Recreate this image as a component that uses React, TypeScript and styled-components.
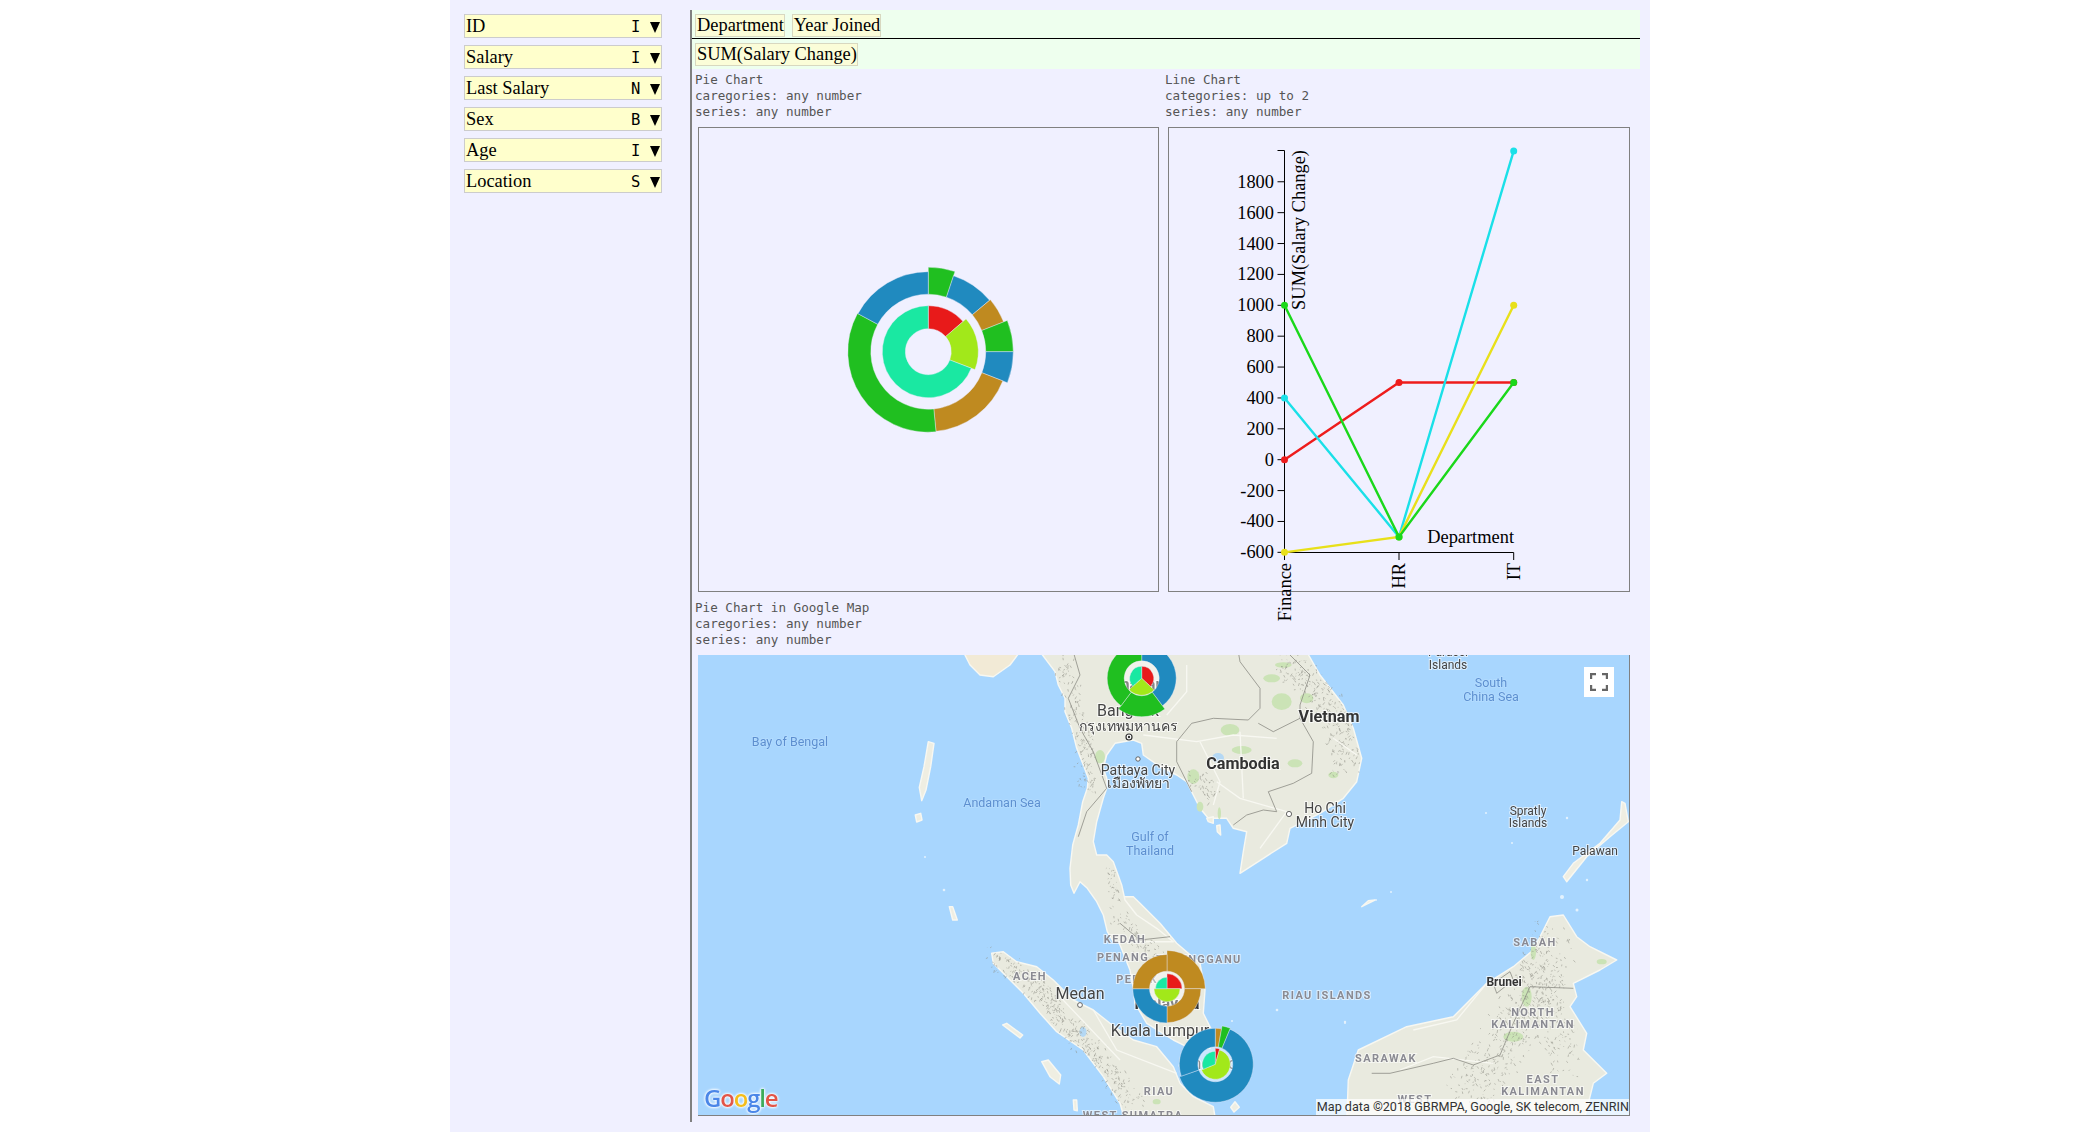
import React from 'react';
import styled, { createGlobalStyle } from 'styled-components';

const GlobalStyle = createGlobalStyle`
  html, body {
    margin: 0;
    background: #fff;
    overflow: hidden;
  }
`;

const SERIF = '"Liberation Serif", "Times New Roman", serif';
const MONO = '"DejaVu Sans Mono", monospace';

const Page = styled.div`
  display: flex;
  width: 1200px;
  height: 1132px;
  margin: 0 auto;
  background: #f0f0ff;
  font-family: ${SERIF};
  font-size: 18.4px;
  color: #000;
`;

const Sidebar = styled.div`
  display: flex;
  flex-direction: column;
  gap: 7px;
  box-sizing: border-box;
  width: 240px;
  padding: 14px 0 0 14px;
`;

const Field = styled.div`
  display: flex;
  align-items: center;
  box-sizing: border-box;
  width: 198px;
  height: 24px;
  padding: 0 0 0 1px;
  background: #ffffcc;
  border: 1px solid #ccc;
`;

const FieldName = styled.span`
  flex: 1;
  line-height: 20px;
`;

const FieldType = styled.span`
  font-family: ${MONO};
  font-size: 15.5px;
  width: 19px;
  margin-top: 1px;
`;

const Arrow = styled.span`
  width: 0;
  height: 0;
  margin: 2px 1px 0 0;
  border-left: 5px solid transparent;
  border-right: 5px solid transparent;
  border-top: 11px solid #000;
`;

const Main = styled.div`
  display: flex;
  flex-direction: column;
  align-self: flex-start;
  box-sizing: border-box;
  width: 950px;
  height: 1112px;
  margin-top: 10px;
  border-left: 2px solid #808080;
`;

const Shelf = styled.div<{ $top?: boolean }>`
  display: flex;
  gap: 7px;
  box-sizing: border-box;
  height: ${(p) => (p.$top ? '29px' : '30px')};
  padding: 4px 3px 0;
  background: #eeffee;
  border-bottom: ${(p) => (p.$top ? '1px solid #000' : 'none')};
`;

const Pill = styled.div`
  box-sizing: border-box;
  height: 23px;
  padding: 0 0 0 1px;
  line-height: 20px;
  white-space: nowrap;
  background: #fbfdd8;
  border: 1px solid #d8d8c0;
`;

const ChartRow = styled.div`
  display: flex;
`;

const ChartCell = styled.div`
  width: 470px;
  padding-left: 3px;
  box-sizing: border-box;
`;

const Caption = styled.div`
  padding-top: 3px;
  font-family: ${MONO};
  font-size: 12.6px;
  line-height: 16px;
  color: #555;
  white-space: pre;
`;

const ChartBox = styled.div<{ $wide?: boolean }>`
  box-sizing: border-box;
  width: ${(p) => (p.$wide ? '462px' : '461px')};
  height: 465px;
  margin: 7px 0 0 3px;
  border: 1px solid #808080;
`;

const ChartSvg = styled.svg`
  display: block;
  width: 100%;
  height: 100%;
  overflow: visible;
`;

const MapSection = styled.div`
  padding: 5px 0 0 3px;
`;

const MapBox = styled.div`
  position: relative;
  box-sizing: border-box;
  width: 932px;
  height: 461px;
  margin: 7px 0 0 3px;
  overflow: hidden;
  background: #a8d6fe;
  border-right: 1px solid #808080;
  border-bottom: 1px solid #808080;
`;

const MapSvg = styled.svg`
  display: block;
  width: 931px;
  height: 460px;
`;

const FullscreenButton = styled.div`
  position: absolute;
  top: 12px;
  right: 15px;
  display: flex;
  align-items: center;
  justify-content: center;
  width: 30px;
  height: 30px;
  background: #fff;
`;

const Attribution = styled.div`
  position: absolute;
  right: 0;
  bottom: 0;
  height: 16px;
  padding: 0 0 0 1px;
  font-family: Roboto, sans-serif;
  font-size: 12.6px;
  line-height: 16px;
  color: #333;
  white-space: nowrap;
  background: rgba(255, 255, 255, 0.75);
`;

const GoogleLogo = styled.div`
  position: absolute;
  left: 6px;
  bottom: 3px;
  font-family: "Open Sans", sans-serif;
  font-size: 24px;
  font-weight: 600;
  line-height: 28px;
  letter-spacing: -1.2px;
  text-shadow: 0 0 3px #fff, 0 0 3px #fff, 0 0 2px #fff;
  filter: blur(0.4px);
`;

const GoogleLetter = styled.span<{ $color: string }>`
  color: ${(p) => p.$color};
`;

const AxisText = styled.text`
  font-family: ${SERIF};
  font-size: 18.4px;
  fill: #000;
`;

const labelStyles = {
  water: 'font-size: 12.5px; fill: #5d8fd0; stroke: rgba(190,225,255,0.6); stroke-width: 1.5px;',
  city: 'font-size: 14px; fill: #444; stroke: rgba(255,255,255,0.7); stroke-width: 2px;',
  small: 'font-size: 12px; fill: #444; stroke: rgba(255,255,255,0.6); stroke-width: 2px;',
  big: 'font-size: 16px; fill: #444; stroke: rgba(255,255,255,0.7); stroke-width: 2px;',
  country: 'font-size: 16.2px; font-weight: 700; fill: #333; stroke: rgba(255,255,255,0.7); stroke-width: 2px;',
  brunei: 'font-size: 12px; font-weight: 700; fill: #333; stroke: rgba(255,255,255,0.7); stroke-width: 2px;',
  region: 'font-size: 11px; font-weight: 700; letter-spacing: 1.4px; fill: #8a8a92; stroke: rgba(255,255,255,0.6); stroke-width: 2px;',
};

type LabelKind = keyof typeof labelStyles;

const MapLabel = styled.text<{ $kind: LabelKind }>`
  font-family: Roboto, "Noto Sans", "DejaVu Sans", sans-serif;
  text-anchor: middle;
  paint-order: stroke;
  filter: blur(0.35px);
  ${(p) => labelStyles[p.$kind]}
`;

const COLORS = {
  red: '#e81a1a',
  lime: '#a2e81a',
  teal: '#1ae8a2',
  green: '#20bf20',
  blue: '#208abf',
  gold: '#bf8a20',
};

interface Slice {
  from: number;
  to: number;
  r: number;
  color: string;
}

const polar = (cx: number, cy: number, r: number, deg: number) => {
  const a = (deg * Math.PI) / 180;
  return `${(cx + r * Math.sin(a)).toFixed(2)} ${(cy - r * Math.cos(a)).toFixed(2)}`;
};

const slicePath = (cx: number, cy: number, inner: number, s: Slice) => {
  const large = s.to - s.from > 180 ? 1 : 0;
  const outerArc = `M${polar(cx, cy, s.r, s.from)}A${s.r} ${s.r} 0 ${large} 1 ${polar(cx, cy, s.r, s.to)}`;
  if (inner === 0) return `${outerArc}L${cx} ${cy}Z`;
  return `${outerArc}L${polar(cx, cy, inner, s.to)}A${inner} ${inner} 0 ${large} 0 ${polar(cx, cy, inner, s.from)}Z`;
};

const Donut: React.FC<{
  cx: number;
  cy: number;
  holes: [number, number];
  inner: Slice[];
  outer: Slice[];
  veil?: boolean;
}> = ({ cx, cy, holes, inner, outer, veil }) => (
  <g stroke="rgba(235,235,250,0.8)" strokeWidth={0.5}>
    {veil && <circle cx={cx} cy={cy} r={holes[1]} fill="rgba(255,255,255,0.4)" stroke="none" />}
    {inner.map((s) => (
      <path key={`i${s.from}`} d={slicePath(cx, cy, holes[0], s)} fill={s.color} />
    ))}
    {outer.map((s) => (
      <path key={`o${s.from}`} d={slicePath(cx, cy, holes[1], s)} fill={s.color} />
    ))}
  </g>
);

const FIELDS = [
  ['ID', 'I'],
  ['Salary', 'I'],
  ['Last Salary', 'N'],
  ['Sex', 'B'],
  ['Age', 'I'],
  ['Location', 'S'],
];

const yOf = (v: number) => 459.7 - v * 0.1544;
const X_POS = [1284.5, 1399, 1513.7];
const SERIES = [
  { color: '#ee1c1c', values: [0, 500, 500] },
  { color: '#1ae0e8', values: [400, -500, 2000] },
  { color: '#e8e01a', values: [-600, -500, 1000] },
  { color: '#1ad81a', values: [1000, -500, 500] },
];
const Y_TICKS = [-600, -400, -200, 0, 200, 400, 600, 800, 1000, 1200, 1400, 1600, 1800];

const LineChart = () => (
  <ChartSvg viewBox="1169 128 460 463">
    <g stroke="#000" strokeWidth={1} fill="none">
      <path d={`M1277.5 150.5H1284.5V552.5H1513.7`} />
      {Y_TICKS.map((t) => (
        <path key={t} d={`M1277.5 ${yOf(t)}H1284.5`} />
      ))}
      {X_POS.map((x) => (
        <path key={x} d={`M${x} 552.5V560`} />
      ))}
    </g>
    {Y_TICKS.map((t) => (
      <AxisText key={t} x={1274} y={yOf(t) + 6} textAnchor="end">
        {t}
      </AxisText>
    ))}
    {['Finance', 'HR', 'IT'].map((name, i) => (
      <AxisText key={name} textAnchor="end" transform={`translate(${X_POS[i] + 6} 563) rotate(-90)`}>
        {name}
      </AxisText>
    ))}
    <AxisText textAnchor="end" transform="translate(1305 150) rotate(-90)">
      SUM(Salary Change)
    </AxisText>
    <AxisText x={1514} y={543} textAnchor="end">
      Department
    </AxisText>
    {SERIES.map((s) => (
      <g key={s.color} fill={s.color}>
        <polyline
          points={s.values.map((v, i) => `${X_POS[i]},${yOf(v)}`).join(' ')}
          stroke={s.color}
          strokeWidth={2.4}
          fill="none"
        />
        {s.values.map((v, i) => (
          <circle key={i} cx={X_POS[i]} cy={yOf(v)} r={3.5} />
        ))}
      </g>
    ))}
  </ChartSvg>
);

// outlines below were traced from 3x crops, so each set has its crop origin
const Z9 = [1000, 655];
const Z10 = [960, 900];
const Z6 = [1300, 650];
const Z11 = [1400, 880];

const trace = (o: number[], pts: number[], closed = true) => {
  let d = '';
  for (let i = 0; i < pts.length; i += 2) {
    d += `${i ? 'L' : 'M'}${(o[0] + pts[i] / 3).toFixed(1)} ${(o[1] + pts[i + 1] / 3).toFixed(1)}`;
  }
  return closed ? `${d}Z` : d;
};

const MALAYA_AND_EAST = [
  trace(Z10, [
    410, -10, 440, 40, 470, 110, 490, 160, 510, 210, 520, 265, 525, 310, 560, 370, 640, 420, 680, 440, 750, 445, 760, 400,
    730, 340, 735, 270, 720, 190, 650, 130, 600, 70, 540, 10, 520, -10,
  ]),
  trace(Z9, [
    120, -10, 165, 50, 175, 90, 195, 130, 195, 170, 215, 220, 230, 280, 250, 330, 265, 370, 262, 400, 248, 440, 235, 510,
    218, 570, 210, 640, 212, 690, 222, 715, 240, 680, 262, 700, 290, 740, 310, 780, 322, 830, 340, 860, 520, 860, 470, 820,
    410, 780, 375, 735, 365, 690, 340, 620, 320, 600, 290, 600, 280, 560, 290, 500, 310, 430, 320, 400, 320, 370, 310, 340,
    320, 300, 345, 265, 400, 255, 425, 265, 430, 300, 480, 335, 530, 360, 560, 380, 580, 420, 600, 460, 625, 490, 680, 490,
    700, 520, 740, 530, 730, 590, 720, 655, 790, 610, 860, 565, 870, 520, 900, 505, 960, 475, 1030, 430, 1070, 380, 1085,
    310, 1060, 220, 1030, 150, 960, 60, 920, -10,
  ]),
];

const SUMATRA = trace(Z10, [
  95, 160, 130, 155, 170, 185, 230, 200, 280, 240, 340, 300, 400, 330, 450, 370, 520, 420, 590, 440, 640, 500, 660, 550,
  700, 590, 760, 620, 770, 680, 500, 680, 480, 610, 430, 530, 370, 450, 290, 395, 240, 340, 190, 280, 130, 220, 100, 190,
]);

const BORNEO = trace(Z6, [
  140, 1420, 145, 1290, 175, 1200, 320, 1130, 460, 1100, 560, 1000, 640, 950, 700, 900, 750, 800, 790, 795, 830, 860,
  870, 890, 950, 930, 900, 960, 820, 1000, 830, 1040, 810, 1070, 860, 1150, 850, 1200, 920, 1270, 880, 1300, 850, 1420,
]);

const IRRAWADDY = trace(Z9, [-110, -10, 60, -10, 30, 30, -20, 65, -60, 60, -90, 30]);

const ISLANDS = [
  trace([900, 700], [85, 125, 102, 130, 92, 200, 78, 270, 65, 302, 58, 262, 72, 200]),
  trace([900, 700], [46, 345, 62, 340, 66, 360, 50, 366]),
  trace([900, 700], [148, 620, 158, 620, 172, 660, 158, 660]),
  trace(Z10, [128, 375, 140, 370, 188, 405, 180, 414]),
  trace(Z10, [245, 485, 265, 480, 302, 525, 298, 552, 270, 530]),
  trace(Z10, [340, 600, 350, 600, 352, 632, 342, 630]),
  trace(Z10, [812, 622, 825, 605, 838, 622, 822, 636]),
  trace(Z6, [965, 455, 975, 460, 985, 515, 930, 560, 860, 620, 800, 695, 790, 680, 820, 640, 900, 580, 960, 510]),
  trace(Z6, [185, 770, 205, 752, 225, 750, 205, 760]),
  trace(Z9, [620, 490, 640, 485, 640, 505, 625, 500]),
  trace(Z9, [650, 512, 660, 510, 662, 540, 652, 530]),
];

const DOTS = [
  [925, 857, 1],
  [944, 890, 1.3],
  [1277, 1010, 1.3],
  [1232, 1021, 1],
  [1345, 1022, 1.2],
  [1486, 813, 1],
  [1567, 818, 1.2],
  [1512, 843, 1],
  [1587, 880, 1.2],
  [1577, 910, 1.5],
  [1562, 897, 2],
  [1391, 892, 1],
  [1345, 1023, 1],
  [1376, 900, 1],
];

const BORDERS = [
  trace(Z9, [530, 260, 575, 205, 640, 190, 745, 195, 780, 160, 780, 100, 720, 20, 715, -10], false),
  trace(Z9, [775, 205, 820, 230, 900, 190, 940, 260, 935, 355, 880, 385, 805, 410, 830, 470, 790, 465, 740, 480, 700, 510], false),
  trace(Z9, [530, 260, 530, 320, 575, 410], false),
  trace(Z9, [220, -10, 240, 60, 205, 130, 240, 220, 280, 290, 320, 400, 260, 470, 235, 545], false),
  trace(Z9, [860, -10, 930, 60, 900, 150, 900, 190], false),
  trace(Z10, [480, 70, 540, 120, 630, 110], false),
  trace(Z6, [215, 1270, 270, 1270, 400, 1240, 460, 1225, 520, 1245, 600, 1215, 640, 1120, 690, 1010, 820, 1015], false),
  trace(Z6, [580, 1000, 630, 965, 640, 990, 590, 1030, 580, 1000], false),
];

const ROADS = [
  trace(Z9, [430, 240, 590, 260, 700, 240, 830, 250], false),
  trace(Z9, [650, 380, 720, 430, 860, 470], false),
  trace(Z9, [860, 470, 780, 580], false),
  trace(Z9, [1000, 250, 1070, 300], false),
  trace(Z9, [560, 30, 560, 110, 500, 180], false),
  trace(Z9, [600, 260, 660, 380, 640, 450], false),
  trace(Z9, [720, 230, 730, 430], false),
  trace(Z10, [400, 330, 470, 450, 650, 520], false),
  trace(Z10, [300, 290, 480, 480], false),
  trace(Z11, [40, 450, 170, 420, 260, 310], false),
  trace(Z11, [0, 570, 100, 530, 280, 550], false),
];

const PATCHES = [
  [Z9, 845, 140, 30, 25],
  [Z9, 920, 130, 20, 15],
  [Z9, 690, 225, 28, 18],
  [Z9, 725, 285, 30, 12],
  [Z9, 885, 325, 22, 12],
  [Z9, 580, 365, 18, 22],
  [Z9, 815, 70, 25, 12],
  [Z9, 1000, 360, 15, 10],
  [Z9, 300, 305, 15, 20],
  [Z9, 600, 455, 10, 15],
  [Z9, 658, 475, 5, 18],
  [Z9, 850, 30, 25, 8],
  [Z10, 590, 605, 12, 8],
  [Z11, 340, 470, 30, 15],
  [Z11, 380, 350, 15, 30],
  [Z11, 400, 215, 8, 25],
  [Z11, 605, 245, 15, 8],
] as [number[], number, number, number, number][];

// hill shading: short grey strokes scattered along the ridges
const speckle = (o: number[], ridge: number[], count: number, spread: number, seed: number) => {
  let s = seed;
  const rnd = () => {
    s = (s * 16807) % 2147483647;
    return s / 2147483647;
  };
  let d = '';
  for (let i = 0; i < count; i++) {
    const t = rnd() * (ridge.length / 2 - 1);
    const k = Math.floor(t) * 2;
    const f = t - Math.floor(t);
    const x = o[0] + (ridge[k] + (ridge[k + 2] - ridge[k]) * f) / 3 + (rnd() - 0.5) * spread;
    const y = o[1] + (ridge[k + 1] + (ridge[k + 3] - ridge[k + 1]) * f) / 3 + (rnd() - 0.5) * spread;
    d += `M${x.toFixed(1)} ${y.toFixed(1)}l${(rnd() * 4 - 2).toFixed(1)} ${(rnd() * 4 - 1).toFixed(1)}`;
  }
  return d;
};

const HILLS = [
  speckle(Z10, [110, 170, 230, 260, 300, 350, 420, 470, 520, 620], 420, 20, 11),
  speckle(Z11, [460, 180, 400, 340, 300, 500, 200, 640], 480, 44, 23),
  speckle(Z11, [430, 300, 500, 560], 160, 34, 37),
  speckle(Z9, [860, 20, 1000, 170, 1040, 330], 300, 28, 41),
  speckle(Z9, [190, 10, 250, 250, 260, 400], 170, 20, 53),
  speckle(Z9, [590, 370, 640, 420], 50, 18, 61),
  speckle(Z10, [470, 40, 600, 190], 90, 18, 71),
  speckle(Z9, [330, 640, 350, 730], 30, 10, 83),
].join('');

const LABELS: [LabelKind, number, number, string][] = [
  ['water', 790, 746, 'Bay of Bengal'],
  ['water', 1002, 807, 'Andaman Sea'],
  ['water', 1150, 841, 'Gulf of'],
  ['water', 1150, 855, 'Thailand'],
  ['water', 1491, 687, 'South'],
  ['water', 1491, 701, 'China Sea'],
  ['country', 1329, 722, 'Vietnam'],
  ['country', 1243, 769, 'Cambodia'],
  ['country', 1142, 690, 'Thailand'],
  ['country', 1167, 1009, 'Malaysia'],
  ['big', 1215, 1069, 'Singapore'],
  ['city', 1325, 813, 'Ho Chi'],
  ['city', 1325, 827, 'Minh City'],
  ['big', 1128, 716, 'Bangkok'],
  ['city', 1128, 731, 'กรุงเทพมหานคร'],
  ['city', 1138, 775, 'Pattaya City'],
  ['city', 1138, 788, 'เมืองพัทยา'],
  ['small', 1448, 656, 'Paracel'],
  ['small', 1448, 669, 'Islands'],
  ['small', 1528, 815, 'Spratly'],
  ['small', 1528, 827, 'Islands'],
  ['small', 1595, 855, 'Palawan'],
  ['brunei', 1504, 986, 'Brunei'],
  ['region', 1535, 946, 'SABAH'],
  ['region', 1533, 1016, 'NORTH'],
  ['region', 1533, 1028, 'KALIMANTAN'],
  ['region', 1327, 999, 'RIAU ISLANDS'],
  ['region', 1386, 1062, 'SARAWAK'],
  ['region', 1543, 1083, 'EAST'],
  ['region', 1543, 1095, 'KALIMANTAN'],
  ['region', 1125, 943, 'KEDAH'],
  ['region', 1123, 961, 'PENANG'],
  ['region', 1199, 963, 'TERENGGANU'],
  ['region', 1137, 983, 'PERAK'],
  ['region', 1030, 980, 'ACEH'],
  ['region', 1159, 1095, 'RIAU'],
  ['region', 1133, 1119, 'WEST SUMATRA'],
  ['region', 1415, 1103, 'WEST'],
  ['big', 1080, 999, 'Medan'],
  ['big', 1160, 1036, 'Kuala Lumpur'],
];

const MAP_PIES = [
  {
    cx: 1141.7,
    cy: 678.3,
    inner: [
      { from: 0, to: 133, r: 12, color: COLORS.red },
      { from: 133, to: 228, r: 17, color: COLORS.lime },
      { from: 228, to: 360, r: 12, color: COLORS.teal },
    ],
    outer: [
      { from: 0, to: 143, r: 34.5, color: COLORS.blue },
      { from: 143, to: 217, r: 38.5, color: COLORS.green },
      { from: 217, to: 360, r: 34.5, color: COLORS.green },
    ],
  },
  {
    cx: 1167,
    cy: 988.7,
    inner: [
      { from: 0, to: 90, r: 15, color: COLORS.red },
      { from: 90, to: 270, r: 13, color: COLORS.lime },
      { from: 270, to: 360, r: 11.5, color: COLORS.teal },
    ],
    outer: [
      { from: 0, to: 90, r: 38.3, color: COLORS.gold },
      { from: 90, to: 180, r: 34, color: COLORS.gold },
      { from: 180, to: 270, r: 34.3, color: COLORS.blue },
      { from: 270, to: 360, r: 34.3, color: COLORS.gold },
    ],
  },
  {
    cx: 1215.3,
    cy: 1064.3,
    inner: [
      { from: 0, to: 16, r: 16, color: COLORS.red },
      { from: 16, to: 247.5, r: 15, color: COLORS.lime },
      { from: 247.5, to: 360, r: 13, color: COLORS.teal },
    ],
    outer: [
      { from: 0, to: 10, r: 36, color: COLORS.gold },
      { from: 10, to: 22.7, r: 39, color: COLORS.green },
      { from: 22.7, to: 250.8, r: 38, color: COLORS.blue },
      { from: 250.8, to: 360, r: 36, color: COLORS.blue },
    ],
  },
];

const MapDrawing = () => (
  <MapSvg viewBox="698 655 931 460">
    <defs>
      <filter id="soft" x="-2%" y="-2%" width="104%" height="104%">
        <feGaussianBlur stdDeviation="0.5" />
      </filter>
    </defs>
    <g filter="url(#soft)">
      <g fill="#e9eadf" stroke="#f8f8f2" strokeWidth={1.4} strokeLinejoin="round">
        {MALAYA_AND_EAST.map((d, i) => (
          <path key={i} d={d} />
        ))}
        <path d={SUMATRA} />
        <path d={BORNEO} />
        <path d={IRRAWADDY} fill="#f2ead6" />
        {ISLANDS.map((d, i) => (
          <path key={i} d={d} fill="#efeee2" />
        ))}
      </g>
      {DOTS.map(([x, y, r], i) => (
        <circle key={i} cx={x} cy={y} r={r} fill="#e4f2fd" />
      ))}
      {PATCHES.map(([o, x, y, rx, ry], i) => (
        <ellipse key={i} cx={o[0] + x / 3} cy={o[1] + y / 3} rx={rx / 3} ry={ry / 3} fill="#cbe3b6" />
      ))}
      <ellipse cx={1218} cy={758} rx={6} ry={5} fill="#b4d8f4" />
      <ellipse cx={1083} cy={1032} rx={3.5} ry={5} fill="#b4d8f4" />
      <path d={HILLS} stroke="#8e8e84" strokeWidth={0.7} fill="none" opacity={0.75} />
      <g fill="none" stroke="#f8f8f2" strokeWidth={1.3}>
        {ROADS.map((d, i) => (
          <path key={i} d={d} />
        ))}
      </g>
      <g fill="none" stroke="#8c8c84" strokeWidth={0.8}>
        {BORDERS.map((d, i) => (
          <path key={i} d={d} />
        ))}
      </g>
    </g>
    {LABELS.map(([kind, x, y, text]) => (
      <MapLabel key={`${text}${x}`} $kind={kind} x={x} y={y}>
        {text}
      </MapLabel>
    ))}
    <circle cx={1129} cy={737} r={3} fill="#fff" stroke="#333" strokeWidth={1.2} />
    <circle cx={1129} cy={737} r={1.2} fill="#333" />
    <circle cx={1138} cy={759} r={2.2} fill="#fff" stroke="#555" strokeWidth={0.9} />
    <circle cx={1289} cy={814} r={2.6} fill="#fff" stroke="#555" strokeWidth={0.9} />
    <circle cx={1080} cy={1005} r={2.4} fill="#fff" stroke="#555" strokeWidth={0.9} />
    {MAP_PIES.map((p) => (
      <Donut key={p.cx} cx={p.cx} cy={p.cy} holes={[0, 17.5]} inner={p.inner} outer={p.outer} veil />
    ))}
  </MapSvg>
);

const GOOGLE: [string, string][] = [
  ['G', '#4a86e8'],
  ['o', '#e25548'],
  ['o', '#f4bd1c'],
  ['g', '#4a86e8'],
  ['l', '#3dab5a'],
  ['e', '#e25548'],
];

const App: React.FC = () => (
  <Page>
    <GlobalStyle />
    <Sidebar>
      {FIELDS.map(([name, type]) => (
        <Field key={name}>
          <FieldName>{name}</FieldName>
          <FieldType>{type}</FieldType>
          <Arrow />
        </Field>
      ))}
    </Sidebar>
    <Main>
      <Shelf $top>
        <Pill>Department</Pill>
        <Pill>Year Joined</Pill>
      </Shelf>
      <Shelf>
        <Pill>SUM(Salary Change)</Pill>
      </Shelf>
      <ChartRow>
        <ChartCell>
          <Caption>{'Pie Chart\ncaregories: any number\nseries: any number'}</Caption>
          <ChartBox>
            <ChartSvg viewBox="699 128 459 463">
              <Donut
                cx={928.3}
                cy={351.7}
                holes={[23, 57.5]}
                inner={[
                  { from: 0, to: 49, r: 46, color: COLORS.red },
                  { from: 49, to: 111, r: 50, color: COLORS.lime },
                  { from: 111, to: 360, r: 46, color: COLORS.teal },
                ]}
                outer={[
                  { from: 0, to: 18.4, r: 84.5, color: COLORS.green },
                  { from: 18.4, to: 50, r: 80, color: COLORS.blue },
                  { from: 50, to: 68.4, r: 81, color: COLORS.gold },
                  { from: 68.4, to: 90, r: 85, color: COLORS.green },
                  { from: 90, to: 111.4, r: 85, color: COLORS.blue },
                  { from: 111.4, to: 174.5, r: 80, color: COLORS.gold },
                  { from: 174.5, to: 298.4, r: 80.5, color: COLORS.green },
                  { from: 298.4, to: 360, r: 80, color: COLORS.blue },
                ]}
              />
            </ChartSvg>
          </ChartBox>
        </ChartCell>
        <ChartCell>
          <Caption>{'Line Chart\ncategories: up to 2\nseries: any number'}</Caption>
          <ChartBox $wide>
            <LineChart />
          </ChartBox>
        </ChartCell>
      </ChartRow>
      <MapSection>
        <Caption>{'Pie Chart in Google Map\ncaregories: any number\nseries: any number'}</Caption>
        <MapBox>
          <MapDrawing />
          <FullscreenButton>
            <svg width="18" height="18" viewBox="0 0 18 18" fill="none" stroke="#666" strokeWidth="2.4">
              <path d="M1 6V1H6M12 1H17V6M17 12V17H12M6 17H1V12" />
            </svg>
          </FullscreenButton>
          <GoogleLogo>
            {GOOGLE.map(([ch, color], i) => (
              <GoogleLetter key={i} $color={color}>
                {ch}
              </GoogleLetter>
            ))}
          </GoogleLogo>
          <Attribution>Map data ©2018 GBRMPA, Google, SK telecom, ZENRIN</Attribution>
        </MapBox>
      </MapSection>
    </Main>
  </Page>
);

export default App;
